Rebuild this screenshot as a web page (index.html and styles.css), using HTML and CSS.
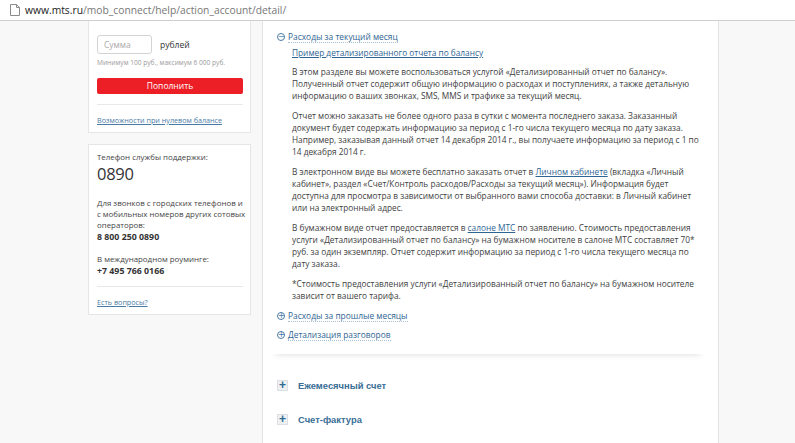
FILE: index.html
```html
<!DOCTYPE html>
<html lang="ru">
<head>
<meta charset="utf-8">
<title>МТС — Детализация</title>
<link rel="stylesheet" href="styles.css">
</head>
<body>
<div class="urlbar">
  <svg class="page-icon" width="10" height="12" viewBox="0 0 10 12"><path d="M0.5 0.5h6l3 3v8h-9z M6.5 0.5v3h3" fill="#fff" stroke="#8a8a8a" stroke-width="1"/></svg>
  <span class="url"><span class="host">www.mts.ru</span>/mob_connect/help/action_account/detail/</span>
</div>
<div class="page">
  <aside class="sidebar">
    <div class="box box-pay">
      <div class="pay-row">
        <div class="sum-input">Сумма</div>
        <span class="rub">рублей</span>
      </div>
      <div class="limits">Минимум 100 руб., максимум 6 000 руб.</div>
      <div class="pay-btn">Пополнить</div>
      <div class="sep"></div>
      <a class="small-link">Возможности при нулевом балансе</a>
    </div>
    <div class="box box-support">
      <div class="sup-title">Телефон службы поддержки:</div>
      <div class="sup-num">0890</div>
      <div class="sup-text">Для звонков с городских телефонов и<br>с мобильных номеров других сотовых<br>операторов:</div>
      <div class="sup-phone">8 800 250 0890</div>
      <div class="sup-text sup-roam">В международном роуминге:</div>
      <div class="sup-phone">+7 495 766 0166</div>
      <div class="sep"></div>
      <a class="small-link">Есть вопросы?</a>
    </div>
  </aside>
  <main class="main">
    <section class="acc">
      <div class="acc-head"><span class="circ">−</span><a class="acc-title">Расходы за текущий месяц</a></div>
      <div class="acc-body">
        <a class="example-link">Пример детализированного отчета по балансу</a>
        <p>В этом разделе вы можете воспользоваться услугой «Детализированный отчет по балансу».<br>Полученный отчет содержит общую информацию о расходах и поступлениях, а также детальную<br>информацию о ваших звонках, SMS, MMS и трафике за текущий месяц.</p>
        <p>Отчет можно заказать не более одного раза в сутки с момента последнего заказа. Заказанный<br>документ будет содержать информацию за период с 1-го числа текущего месяца по дату заказа.<br>Например, заказывая данный отчет 14 декабря 2014 г., вы получаете информацию за период с 1 по<br>14 декабря 2014 г.</p>
        <p>В электронном виде вы можете бесплатно заказать отчет в <a>Личном кабинете</a> (вкладка «Личный<br>кабинет», раздел «Счет/Контроль расходов/Расходы за текущий месяц»). Информация будет<br>доступна для просмотра в зависимости от выбранного вами способа доставки: в Личный кабинет<br>или на электронный адрес.</p>
        <p>В бумажном виде отчет предоставляется в <a>салоне МТС</a> по заявлению. Стоимость предоставления<br>услуги «Детализированный отчет по балансу» на бумажном носителе в салоне МТС составляет 70*<br>руб. за один экземпляр. Отчет содержит информацию за период с 1-го числа текущего месяца по<br>дату заказа.</p>
        <p>*Стоимость предоставления услуги «Детализированный отчет по балансу» на бумажном носителе<br>зависит от вашего тарифа.</p>
      </div>
      <div class="acc-head"><span class="circ">+</span><a class="acc-title">Расходы за прошлые месяцы</a></div>
      <div class="acc-head"><span class="circ">+</span><a class="acc-title">Детализация разговоров</a></div>
    </section>
    <div class="fold"><span class="plus-box">+</span><span class="fold-title">Ежемесячный счет</span></div>
    <div class="fold"><span class="plus-box">+</span><span class="fold-title">Счет-фактура</span></div>
  </main>
</div>
</body>
</html>
```
FILE: styles.css
```css
* { box-sizing: border-box; }
html, body { margin: 0; padding: 0; }
body {
  width: 795px;
  height: 443px;
  overflow: hidden;
  background: #f8f8f8;
  font-family: "Open Sans", "Noto Sans", sans-serif;
  color: #404040;
}
.urlbar {
  height: 21px;
  background: #fff;
  border-bottom: 1px solid #cfcfcf;
  display: flex;
  align-items: center;
  padding-left: 10px;
  gap: 5px;
}
.url {
  font-family: "Open Sans", sans-serif;
  font-size: 10.3px;
  color: #777;
  white-space: nowrap;
}
.host { color: #222; }
.page {
  display: flex;
  padding-left: 88px;
  height: 422px;
}
.sidebar {
  width: 163px;
  display: flex;
  flex-direction: column;
  gap: 11px;
}
.box {
  background: #fff;
  border: 1px solid #e6e6e6;
  padding: 0 7px 0 8px;
  white-space: nowrap;
}
.box-pay {
  border-top: none;
  padding-top: 14px;
  height: 112px;
}
.pay-row { display: flex; align-items: center; gap: 8px; }
.sum-input {
  width: 55px;
  height: 19px;
  border: 1px solid #d3d3d3;
  border-radius: 3px;
  font-size: 8.5px;
  color: #aaa;
  padding: 3px 0 0 6px;
}
.rub { font-size: 8.5px; color: #333; }
.limits {
  font-size: 6.6px;
  color: #9a9a9a;
  margin-top: 4px;
}
.pay-btn {
  margin-top: 11px;
  height: 16px;
  background: #ec1f27;
  border-radius: 2px;
  color: #fff;
  font-size: 8.5px;
  text-align: center;
  line-height: 16px;
}
.sep {
  height: 1px;
  background: #e8e8e8;
  margin: 10px 0 10px;
}
.small-link {
  display: block;
  font-size: 7.2px;
  color: #4a7ba6;
  text-decoration: underline;
}
.box-support {
  padding-top: 6px;
  height: 171px;
}
.sup-title { font-size: 7.9px; color: #444; line-height: 12px; }
.sup-num { font-size: 16.5px; color: #333; line-height: 22px; margin-bottom: 13px; letter-spacing: -0.3px; }
.sup-text { font-size: 7.9px; color: #444; line-height: 11px; }
.sup-phone { font-size: 8.8px; font-weight: 700; color: #333; line-height: 13px; }
.sup-roam { margin-top: 10px; }
.box-support .sep { margin: 8px 0 10px; }

.main {
  margin-left: 11px;
  width: 457px;
  background: #fff;
  border-left: 1px solid #e3e3e3;
  border-right: 1px solid #e3e3e3;
  padding: 10px 13px 0 8px;
}
.acc {
  padding: 0 0 6px 6px;
  box-shadow: 0 6px 6px -5px rgba(0,0,0,0.12);
  margin-bottom: 24px;
}
.acc-head {
  display: flex;
  align-items: center;
  height: 12px;
  margin-bottom: 7px;
  font-size: 8.4px;
  white-space: nowrap;
}
.circ {
  width: 8px;
  height: 8px;
  border: 1px solid #4a7ba6;
  border-radius: 50%;
  color: #4a7ba6;
  font-size: 8px;
  line-height: 5px;
  text-align: center;
  margin-right: 3px;
  font-family: "DejaVu Sans", sans-serif;
}
.acc-title { color: #2f6594; border-bottom: 1px dotted #a9bfd2; line-height: 11px; }
.acc-body { padding-left: 15px; margin-top: -3px; }
.example-link {
  display: block;
  font-size: 8.3px;
  color: #2f6594;
  text-decoration: underline;
  line-height: 12px;
  margin-bottom: 7px;
}
.acc-body p {
  margin: 0 0 8px;
  font-size: 8.3px;
  line-height: 12px;
  color: #3e3e3e;
  white-space: nowrap;
}
.acc-body p a { color: #2f6594; text-decoration: underline; }
.fold {
  display: flex;
  align-items: center;
  height: 14px;
  margin-bottom: 20px;
  padding-left: 6px;
}
.plus-box {
  width: 11px;
  height: 11px;
  background: #eef0f2;
  border: 1px solid #dcdfe3;
  color: #2f6a93;
  font-family: "Liberation Sans", sans-serif;
  font-weight: 700;
  font-size: 12px;
  line-height: 8px;
  text-align: center;
  margin-right: 10px;
}
.fold-title {
  font-family: "Liberation Sans", sans-serif;
  font-weight: 700;
  font-size: 9.4px;
  color: #3a6e96;
}
```
